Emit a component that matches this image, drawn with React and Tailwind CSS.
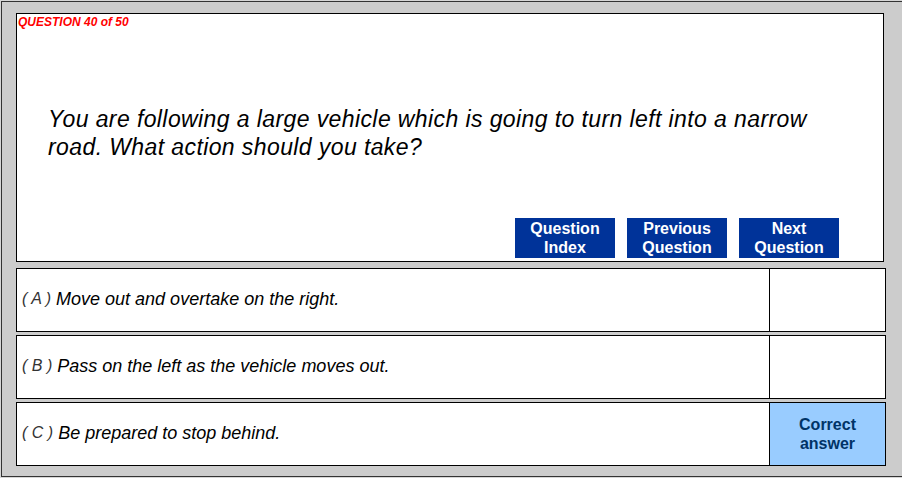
const answers = [
  { letter: 'A', text: 'Move out and overtake on the right.', correct: false },
  { letter: 'B', text: 'Pass on the left as the vehicle moves out.', correct: false },
  { letter: 'C', text: 'Be prepared to stop behind.', correct: true },
]

const NavButton = ({ top, bottom }) => (
  <button
    type="button"
    className="w-[100px] h-[40px] bg-[#003399] text-white font-bold text-[16px] leading-[19px] flex flex-col items-center justify-center"
  >
    <span>{top}</span>
    <span>{bottom}</span>
  </button>
)

const App = () => {
  return (
    <div
      className="w-[902px] h-[478px] overflow-hidden bg-[#d6d6d6] pt-px pl-px"
      style={{ fontFamily: '"Liberation Sans", Arial, sans-serif' }}
    >
      <div className="w-[910px] border border-[#333333] bg-[#cccccc] pt-[11px] pl-[14px] pb-[10px]">
        {/* question panel */}
        <div className="w-[868px] h-[249px] border border-black bg-white flex flex-col">
          <div className="pl-[1px] pt-px text-[12px] leading-[14px] font-bold italic text-[#ff0000]">
            QUESTION 40 of 50
          </div>
          <p className="mt-[76px] ml-[31px] mr-[45px] text-[23px] leading-[28px] tracking-[0.4px] italic text-black">
            You are following a large vehicle which is going to turn left into a narrow road. What action should you take?
          </p>
          <div className="mt-auto mb-[3px] mr-[44px] flex justify-end gap-[12px]">
            <NavButton top="Question" bottom="Index" />
            <NavButton top="Previous" bottom="Question" />
            <NavButton top="Next" bottom="Question" />
          </div>
        </div>

        {/* answers */}
        <div className="mt-[6px] flex flex-col gap-[3px]">
          {answers.map((a) => (
            <div key={a.letter} className="w-[870px] h-[64px] border border-black bg-white flex">
              <div className="flex-1 flex items-center pl-[5px] pb-[2px] border-r border-black text-[18px] italic text-black">
                <span className="text-[16px] text-[#333333] font-light mr-[5px]">( {a.letter} )</span>
                <span>{a.text}</span>
              </div>
              <div
                className={`w-[115px] flex flex-col items-center justify-center text-[16px] leading-[19px] font-bold text-[#003366] ${
                  a.correct ? 'bg-[#99ccff]' : 'bg-white'
                }`}
              >
                {a.correct && (
                  <>
                    <span>Correct</span>
                    <span>answer</span>
                  </>
                )}
              </div>
            </div>
          ))}
        </div>
      </div>
    </div>
  )
}

export default App
